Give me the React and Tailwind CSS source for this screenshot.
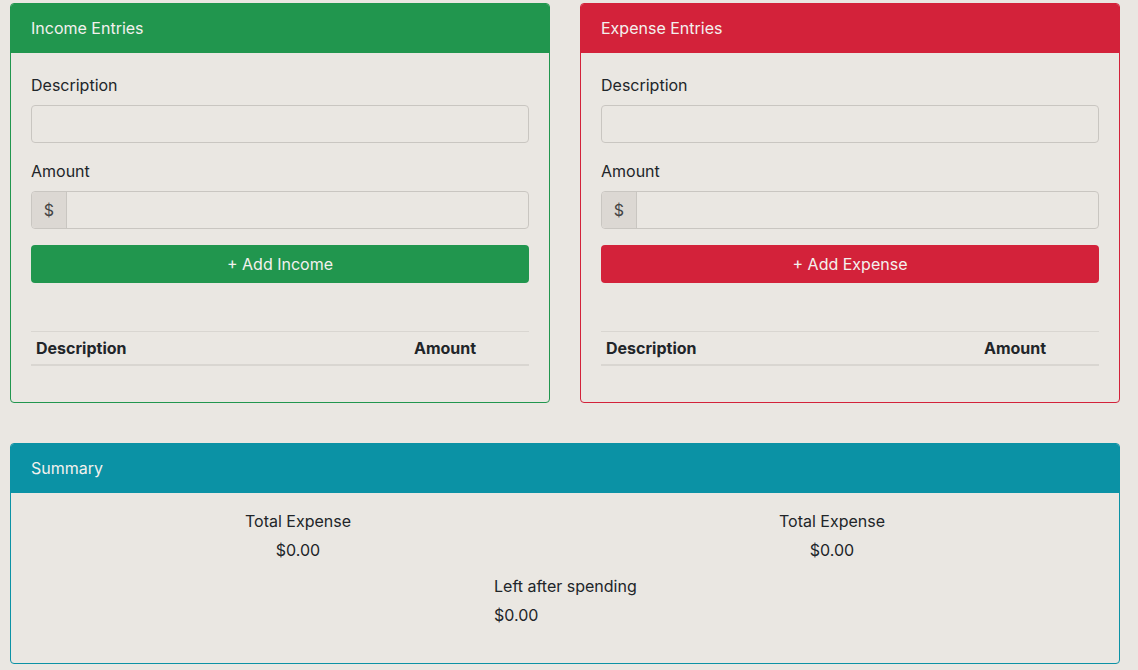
function EntryCard({ title, button, border, bg }) {
  return (
    <div className={`flex-1 rounded border ${border} h-[400px] flex flex-col overflow-hidden`}>
      <div className={`${bg} h-[49px] px-5 flex items-center text-[16px] text-[#f3f1ee] border-b ${border}`}>
        {title}
      </div>
      <div className="px-5 pt-5">
        <label className="block text-[16px] leading-6 mb-2">Description</label>
        <div className="h-[38px] rounded border border-[#c9c6c1]" />
        <label className="block text-[16px] leading-6 mt-4 mb-2">Amount</label>
        <div className="h-[38px] rounded border border-[#c9c6c1] flex">
          <div className="w-[35px] bg-[#dcd8d3] border-r border-[#c9c6c1] rounded-l flex items-center justify-center text-[16px] text-[#444]">
            $
          </div>
        </div>
        <button className={`mt-4 w-full h-[38px] rounded ${bg} text-[16px] text-[#f3f1ee]`}>{button}</button>
        <table className="w-full mt-12 text-[16px]">
          <thead>
            <tr className="border-t border-b-2 border-[#d9d6d1]">
              <th className="text-left font-bold px-[5px] h-[33px] w-[378px]">Description</th>
              <th className="text-left font-bold px-[5px]">Amount</th>
            </tr>
          </thead>
        </table>
      </div>
    </div>
  );
}

export default function App() {
  return (
    <div className="min-h-[670px] bg-[#eae7e2] text-[#212529] font-['Inter','Liberation_Sans',sans-serif] pl-[10px] pr-[18px] pt-[3px] w-full">
      <div className="flex gap-[30px]">
        <EntryCard title="Income Entries" button="+ Add Income" border="border-[#21964e]" bg="bg-[#21964e]" />
        <EntryCard title="Expense Entries" button="+ Add Expense" border="border-[#d3223a]" bg="bg-[#d3223a]" />
      </div>
      <div className="mt-10 rounded border border-[#0b92a5] h-[221px] overflow-hidden">
        <div className="bg-[#0b92a5] h-[49px] px-5 flex items-center text-[16px] text-[#f3f1ee] border-b border-[#0b92a5]">
          Summary
        </div>
        <div className="px-5 pt-4 text-[16px] leading-6">
          <div className="grid grid-cols-2 text-center">
            <div>
              <p>Total Expense</p>
              <p className="mt-[5px]">$0.00</p>
            </div>
            <div>
              <p>Total Expense</p>
              <p className="mt-[5px]">$0.00</p>
            </div>
          </div>
          <div className="ml-[463px] mt-3">
            <p>Left after spending</p>
            <p className="mt-[5px]">$0.00</p>
          </div>
        </div>
      </div>
    </div>
  );
}
